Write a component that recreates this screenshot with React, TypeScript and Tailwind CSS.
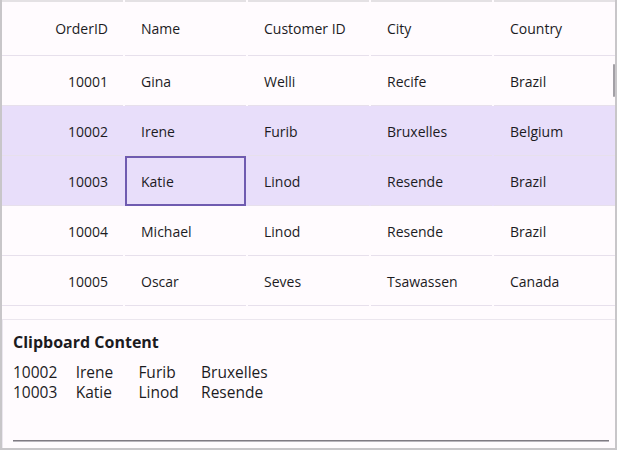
import React from "react";

const cols = ["OrderID", "Name", "Customer ID", "City", "Country"];
const rows = [
  ["10001", "Gina", "Welli", "Recife", "Brazil"],
  ["10002", "Irene", "Furib", "Bruxelles", "Belgium"],
  ["10003", "Katie", "Linod", "Resende", "Brazil"],
  ["10004", "Michael", "Linod", "Resende", "Brazil"],
  ["10005", "Oscar", "Seves", "Tsawassen", "Canada"],
];
const selected = [1, 2];

export default function App() {
  return (
    <div className="w-[617px] h-[450px] border-x-2 border-b-2 border-[#c8c6c9] bg-[#fffbfe] flex flex-col relative text-[#1c1b1f] font-['Open_Sans',sans-serif]">
      <div className="flex flex-col">
        <div className="flex gap-[2px] h-[56px]">
          {cols.map((c, i) => (
            <div
              key={c}
              className={`w-[121px] border-t-2 border-b border-t-[#e4e1e4] border-b-[#e7e0ec] flex items-center text-[14px] ${
                i === 0 ? "justify-end pr-[15px]" : "pl-[16px]"
              }`}
            >
              {c}
            </div>
          ))}
        </div>
        {rows.map((r, ri) => (
          <div
            key={ri}
            className={`flex gap-[2px] h-[50px] ${selected.includes(ri) ? "bg-[#e8defa]" : ""}`}
          >
            {r.map((v, ci) => (
              <div
                key={ci}
                className={`relative w-[121px] border-b border-[#e7e0ec] flex items-center pt-[2px] text-[14px] ${
                  ci === 0 ? "justify-end pr-[15px]" : "pl-[16px]"
                }`}
              >
                {v}
                {ri === 2 && ci === 1 && (
                  <div className="absolute left-0 right-0 top-0 -bottom-px border-2 border-[#6f5bb0]" />
                )}
              </div>
            ))}
          </div>
        ))}
      </div>
      <div className="absolute right-0 top-[64px] w-[2px] h-[33px] rounded-full bg-[#a3a0a6]" />
      <div className="mt-[13px] flex-1 border-t border-l border-[#ebe6ee] flex flex-col pt-[11px] pl-[10px]">
        <div className="text-[16px] leading-[22px] font-bold">Clipboard Content</div>
        <div className="mt-[9px] text-[15.5px] leading-[20px]">
          {[
            ["10002", "Irene", "Furib", "Bruxelles"],
            ["10003", "Katie", "Linod", "Resende"],
          ].map((l, i) => (
            <div key={i} className="grid grid-cols-[62.7px_62.7px_62.7px_auto]">
              {l.map((t, j) => (
                <span key={j}>{t}</span>
              ))}
            </div>
          ))}
        </div>
        <div className="mt-auto mb-[6px] mr-[6px] flex flex-col">
          <div className="h-px bg-[#7f7b83]" />
          <div className="h-px bg-[#b9b5bc]" />
        </div>
      </div>
    </div>
  );
}
